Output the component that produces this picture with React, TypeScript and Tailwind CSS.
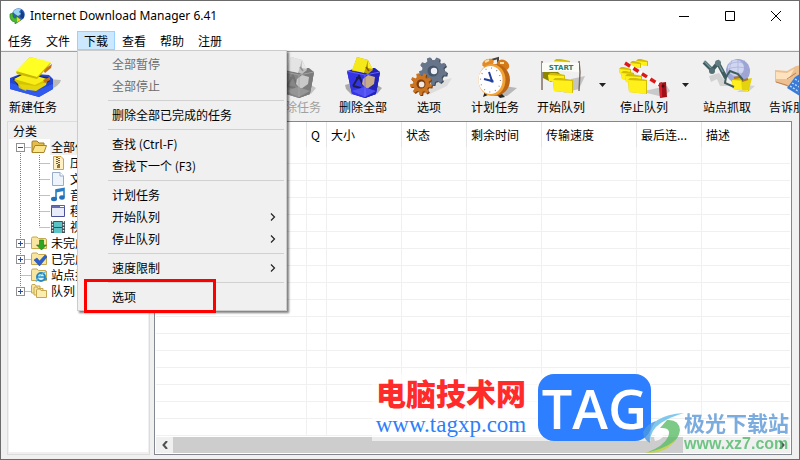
import type { ReactNode } from 'react'
import clsx from 'clsx'

type MenuEntry = { label: string; disabled?: boolean; submenu?: boolean } | null

const menus = ['任务', '文件', '下载', '查看', '帮助', '注册']

// null is a separator line
const downloadMenu: MenuEntry[] = [
	{ label: '全部暂停', disabled: true },
	{ label: '全部停止', disabled: true },
	null,
	{ label: '删除全部已完成的任务' },
	null,
	{ label: '查找 (Ctrl-F)' },
	{ label: '查找下一个 (F3)' },
	null,
	{ label: '计划任务' },
	{ label: '开始队列', submenu: true },
	{ label: '停止队列', submenu: true },
	null,
	{ label: '速度限制', submenu: true },
	null,
	{ label: '选项' },
]

const columns = [
	{ label: '', width: 'w-[151px]' },
	{ label: 'Q', width: 'w-5' },
	{ label: '大小', width: 'w-[75px]' },
	{ label: '状态', width: 'w-[65px]' },
	{ label: '剩余时间', width: 'w-[75px]' },
	{ label: '传输速度', width: 'w-[95px]' },
	{ label: '最后连...', width: 'w-[65px]' },
	{ label: '描述', width: '' },
]

const EMPTY_ROWS = 17

function gearPath(cx: number, cy: number, outer: number, inner: number, teeth: number) {
	const points: string[] = []
	const step = (Math.PI * 2) / teeth
	for (let i = 0; i < teeth; i++) {
		const a = i * step + 0.2
		const corners = [
			[inner, -0.32],
			[outer, -0.18],
			[outer, 0.18],
			[inner, 0.32],
		]
		for (const [r, d] of corners) {
			points.push(`${(cx + r * Math.cos(a + d * step)).toFixed(1)} ${(cy + r * Math.sin(a + d * step)).toFixed(1)}`)
		}
	}
	return `M${points.join('L')}Z`
}

function AppLogo() {
	return (
		<svg viewBox="0 0 16 16" className="h-4 w-4">
			<circle cx="9.5" cy="6.5" r="6.3" fill="#2c62b8" />
			<path d="M4 4Q7-1 12 1L10 4L12 6L9 8L6 6Z" fill="#9bd4ef" />
			<path d="M12 2Q17 6 14 11L11 9L12 6Z" fill="#173c83" />
			<path d="M1 6Q0 13 6 14L6 16L12 12L7 8L7 10Q3 11 4 5Z" fill="#4bb832" stroke="#22731b" strokeWidth=".6" />
			<path d="M8 9L12 12L8 14Z" fill="#f1cf35" />
		</svg>
	)
}

function ToolIcon({ children, className }: { children: ReactNode; className?: string }) {
	return (
		<svg viewBox="0 0 56 44" className={clsx('h-11 w-14 shrink-0', className)}>
			{children}
		</svg>
	)
}

function NewTaskIcon() {
	return (
		<ToolIcon>
			<path d="M42 24L56 25Q55 31 41 37Z" fill="#b9b9b9" />
			<path d="M5 23L18 18L44 20L48 24V34L34 42L5 34Z" fill="#2345cf" />
			<path d="M5 28L33 35L48 29V34L34 42L5 34Z" fill="#3159ee" />
			<path d="M8 24L16 19L43 22L45 26L32 33L13 31Z" fill="#14277f" />
			<path d="M9 25L20 19L42 25L32 33L22 33L21 36L14 33L13 29Z" fill="#d3c400" />
			<path d="M9 24L21 18L42 24L30 30Z" fill="#f8ed16" />
			<path d="M14 29L31 31L42 26L41 30L31 36L17 34Z" fill="#e4d50c" />
			<path d="M38 15L47 9L46 13L40 18ZM38 25L45 22L45 25L40 28Z" fill="#c8710e" />
			<path d="M11 17L25 2L46 8L32 24L12 19Z" fill="#c7b900" />
			<path d="M11 16L25 2L46 7L32 22Z" fill="#ffff24" />
		</ToolIcon>
	)
}

function DeleteIcon({ className }: { className?: string }) {
	return (
		<ToolIcon className={className}>
			<path d="M10 30L17 28V40L11 34ZM42 30L47 33L42 39Z" fill="#aaa" />
			<path d="M12 16L22 13H40L45 17L41 39L30 43L17 39Z" fill="#2321bb" />
			<path d="M12 16L30 20L45 17L41 39L30 43L17 39Z" fill="#3434e2" />
			<path d="M30 20L45 17L41 39L30 43Z" fill="#2424b8" />
			<path d="M18 31L24 21L28 30M18 31L26 33M21 23L26 23" stroke="#1e1e56" strokeWidth="2" fill="none" />
			<path d="M28 24L33 20L40 22L39 29L32 34L27 29Z" fill="#c8ab89" />
			<path d="M17 36L29 32L41 36L30 42Z" fill="#4f50f2" />
			<path d="M12 16L30 20L45 17M30 20V42" stroke="#7470ff" strokeWidth=".8" fill="none" />
			<path d="M22 2L33 5L38 15L33 19L28 17L17 16Z" fill="#b9a700" />
			<path d="M22 2L33 5L29 18L17 15Z" fill="#f5e91a" />
			<path d="M33 6L38 14L33 13Z" fill="#ffed28" />
			<path d="M31 12L34 16" stroke="#875017" strokeWidth="1.5" />
		</ToolIcon>
	)
}

function GearsIcon() {
	return (
		<ToolIcon>
			<path d="M35 27L51 23L46 31L29 39L20 40Z" fill="#ddd" />
			<path d={gearPath(33, 17, 14, 11, 9)} fill="#3e4956" />
			<path d={gearPath(32, 16, 14, 11, 9)} fill="#66758a" />
			<circle cx="32" cy="16" r="5.5" fill="#47566a" />
			<circle cx="33" cy="16" r="3.2" fill="#eef2f6" />
			<path d={gearPath(21, 30, 11, 8, 9)} fill="#7c3c0c" />
			<path d={gearPath(20, 29, 11, 8, 9)} fill="#cb7422" />
			<circle cx="20" cy="29" r="4.5" fill="#7c3c0c" />
			<circle cx="20.6" cy="29.4" r="2.8" fill="#f1e8e0" />
		</ToolIcon>
	)
}

function ClockIcon() {
	return (
		<ToolIcon>
			<path d="M37 31L50 33L40 41H30Z" fill="#b8b8b8" />
			<path d="M18 36L16 42L21 40ZM34 38L38 42L33 43L29 39Z" fill="#252525" />
			<path d="M21 6L31 3L31 8" stroke="#444" strokeWidth="2" fill="none" />
			<ellipse cx="21" cy="8" rx="6" ry="4" fill="#df8b2b" transform="rotate(-22 21 8)" />
			<ellipse cx="36" cy="10" rx="6.5" ry="5" fill="#d47a18" transform="rotate(28 36 10)" />
			<path d="M18 7L22 5M33 8L37 8" stroke="#ffdca2" strokeWidth="2" />
			<ellipse cx="28" cy="25" rx="15" ry="16" fill="#bc6513" />
			<ellipse cx="25" cy="25" rx="13.5" ry="16" fill="#f2a338" />
			<ellipse cx="23.5" cy="25" rx="12" ry="14" fill="#fff" />
			<ellipse cx="23.5" cy="25" rx="10" ry="12" fill="none" stroke="#888" strokeDasharray="1 4.8" strokeWidth="1.2" />
			<path d="M22 17L25 26L17 24" fill="none" stroke="#22419f" strokeWidth="2" />
			<circle cx="25" cy="26" r="1.6" fill="#22419f" />
		</ToolIcon>
	)
}

function Folder({ x, y, w, h }: { x: number; y: number; w: number; h: number }) {
	return (
		<g>
			<path d={`M${x} ${y + 1}L${x + 2} ${y - 1}L${x + w * 0.4} ${y - 1}L${x + w} ${y + 1}V${y + h}L${x + 1} ${y + h - 2}Z`} fill="#d2bd00" />
			<path d={`M${x} ${y + 1}L${x + w - 1} ${y + 2}L${x + w - 1} ${y + h}L${x + 1} ${y + h - 2}Z`} fill="#fff01c" />
		</g>
	)
}

function StartQueueIcon() {
	return (
		<ToolIcon>
			<path d="M38 24L52 21L46 34L30 38L38 33Z" fill="#c4c4c4" />
			<Folder x={21} y={5} w={16} h={6} />
			<path d="M10 17H25L29 21L18 27L10 23Z" fill="#8d8500" />
			<Folder x={15} y={19} w={17} h={9} />
			<Folder x={20} y={24} w={20} h={14} />
			<path d="M9 6V35M46 6L47 17L46 36" stroke="#78665a" strokeWidth="1.4" fill="none" />
			<path d="M9 8Q28 6 46 8V17Q28 15 9 17Z" fill="#fcfcf6" />
			<text x="28" y="15" textAnchor="middle" className="fill-[#1f8078] font-['DejaVu_Sans'] text-[7px] font-bold">
				START
			</text>
		</ToolIcon>
	)
}

function StopQueueIcon() {
	return (
		<ToolIcon>
			<path d="M28 36L51 31L54 36L47 42L31 38Z" fill="#c9c9c9" />
			<Folder x={20} y={5} w={12} h={6} />
			<Folder x={14} y={7} w={11} h={6} />
			<Folder x={3} y={13} w={12} h={8} />
			<Folder x={5} y={17} w={13} h={9} />
			<Folder x={9} y={20} w={17} h={9} />
			<Folder x={12} y={24} w={19} h={15} />
			<path d="M9 8L47 32" stroke="#fff" strokeWidth="3.5" />
			<path d="M9 8L47 32" stroke="#e01717" strokeWidth="3.5" strokeDasharray="6 4" />
			<path d="M43 28L50 27L51 42L44 43Z" fill="#a30e18" />
			<path d="M43 28L46 27V42L44 43Z" fill="#d3232b" />
			<circle cx="47" cy="31" r="1.5" fill="#401019" />
		</ToolIcon>
	)
}

function GrabberIcon() {
	return (
		<ToolIcon>
			<path d="M10 21L20 18L30 31L21 31L18 24L12 27ZM48 30L56 31L49 37H38Z" fill="#d2d2d2" />
			<circle cx="39" cy="16" r="12" fill="#9ea7d6" />
			<circle cx="37" cy="13" r="8" fill="#d0d5f0" />
			<path d="M29 10Q39 4 49 10M27 15Q39 9 51 15M28 21Q39 15 50 21M33 5Q28 16 33 27M39 4V28M45 5Q50 16 45 27" stroke="#98a0d0" strokeWidth=".5" fill="none" />
			<Folder x={33} y={24} w={17} h={12} />
			<path d="M42 25L53 23L50 35L43 35Z" fill="#e2d30e" />
			<path d="M35 23L41 22M43 26L49 24" stroke="#b77519" strokeWidth="2" />
			<path d="M5 7L13 15L19 8L27 23" stroke="#3f5d61" strokeWidth="4" fill="none" />
			<path d="M5 6L12 13M19 8L24 17" stroke="#78979a" strokeWidth="1.4" fill="none" />
			<path d="M27 22L31 16L39 19L44 25M27 22L26 28L35 32" stroke="#405d5e" strokeWidth="2" fill="none" />
			<circle cx="19" cy="8" r="3" fill="#637c80" />
			<circle cx="13" cy="16" r="3" fill="#536f73" />
		</ToolIcon>
	)
}

function TellFriendIcon() {
	return (
		<ToolIcon>
			<path d="M10 15L22 16L31 11L45 9V40L29 34L10 27Z" fill="#edc091" />
			<path d="M11 17L22 18L29 14L24 24L11 24Z" fill="#fde2bd" />
			<path d="M11 27L21 30L29 34M22 24L31 18" stroke="#bd8052" strokeWidth="1" fill="none" />
			<path d="M30 22L38 17V43L22 33Z" fill="#397bd7" />
			<path d="M30 24L38 29M27 28L38 34M25 31L36 38" stroke="#bcdcff" strokeWidth="1.4" strokeDasharray="2 1.5" />
		</ToolIcon>
	)
}

function ToolButton({ label, disabled, children }: { label: string; disabled?: boolean; children: ReactNode }) {
	return (
		<button
			type="button"
			disabled={disabled}
			className="flex w-16 shrink-0 flex-col items-center pt-[3px] leading-4 whitespace-nowrap disabled:text-[#a0a0a0]"
		>
			{children}
			{label}
		</button>
	)
}

function DropArrow({ label }: { label: string }) {
	return (
		<button type="button" aria-label={label} className="flex w-[15px] shrink-0 items-center justify-center">
			<svg viewBox="0 0 7 4" className="mb-1 h-1 w-[7px]">
				<path d="M0 0H7L3.5 4Z" fill="#222" />
			</svg>
		</button>
	)
}

function SmallIcon({ children }: { children: ReactNode }) {
	return (
		<svg viewBox="0 0 16 16" className="h-4 w-4 shrink-0">
			{children}
		</svg>
	)
}

const closedFolder = (
	<path d="M.5 3.5Q.5 2 2 2H6L7.5 3.5H14Q15.5 3.5 15.5 5V13.5H.5Z" fill="#f8e6a0" stroke="#c6a850" />
)

const treeIcons: Record<string, ReactNode> = {
	open: (
		<>
			<path d="M1 13V3Q1 2 2 2H6L8 4H13V13Z" fill="#e6bc4a" stroke="#9e7c28" />
			<path d="M1 13.5L4 6.5H15.5L13 13.5Z" fill="#fbe58c" stroke="#a88426" />
		</>
	),
	zip: (
		<>
			<path d="M3.5 1.5H11L13.5 4V14.5H3.5Z" fill="#fff0c4" stroke="#d2a04c" />
			<path d="M7 2V10M9 3V11" stroke="#735d3b" strokeWidth="2" strokeDasharray="1 1" />
			<path d="M7 10H10V13H7Z" fill="#9c7430" />
		</>
	),
	doc: (
		<>
			<path d="M2.5 1.5H10L13.5 5V14.5H2.5Z" fill="#eef4fc" stroke="#9aabc8" />
			<path d="M10 1.5V5H13.5" fill="#fff" stroke="#9aabc8" />
		</>
	),
	music: (
		<>
			<path d="M6 12V3L14 1.5V10" stroke="#2b7dc4" strokeWidth="1.6" fill="none" />
			<path d="M6 3L14 1.5V4L6 5.5Z" fill="#2b7dc4" />
			<ellipse cx="4" cy="12" rx="3" ry="2.2" fill="#2370b8" />
			<ellipse cx="12" cy="10.5" rx="2.8" ry="2.2" fill="#2370b8" />
		</>
	),
	program: (
		<>
			<path d="M1.5 2.5H14.5V13.5H1.5Z" fill="#e8ebf8" stroke="#4a5096" />
			<path d="M1.5 2.5H14.5V5H1.5Z" fill="#656cb4" />
			<path d="M10 3.5H14" stroke="#fff" />
		</>
	),
	video: (
		<>
			<path d="M1 2H15V14H1Z" fill="#424e58" />
			<path d="M4 3H12V8H4ZM4 9H12V14H4Z" fill="#5bc2c6" />
			<path d="M2.5 2V14M13.5 2V14" stroke="#f0f0f0" strokeDasharray="1.5 1.5" strokeWidth="1.4" />
		</>
	),
	unfinished: (
		<>
			{closedFolder}
			<path d="M8.5 5H12.5V10H15.5L10.5 15L5.5 10H8.5Z" fill="#2fa620" stroke="#1b7010" strokeWidth=".6" />
		</>
	),
	finished: (
		<>
			{closedFolder}
			<path d="M3 9L6 7L8.5 10L14 4L16 6L8.5 15Z" fill="#2a60cf" stroke="#1a4398" strokeWidth=".5" />
		</>
	),
	site: (
		<>
			{closedFolder}
			<circle cx="10" cy="10" r="4" fill="#d9f1fb" stroke="#238bc2" strokeWidth="2" />
			<path d="M6 10H14M13 12H16" stroke="#238bc2" strokeWidth="1.6" />
			<path d="M5 15Q8 7 15.5 4.5" stroke="#5ab8e4" fill="none" />
		</>
	),
	queue: (
		<>
			<path d="M.5 2.5Q.5 1.5 2 1.5H4L5 3H9V10H.5Z" fill="#f8e6a0" stroke="#c6a850" />
			<path d="M3 5Q3 4 4 4H6L7 5.5H12V12H3Z" fill="#f8e6a0" stroke="#c6a850" />
			<path d="M5.5 7Q5.5 6 7 6H9L10 7.5H15.5V14.5H5.5Z" fill="#fbedb0" stroke="#c6a850" />
		</>
	),
}

const tree = [
	{ label: '全部任务', icon: 'open', toggle: '-' },
	{ label: '压缩文件', icon: 'zip', child: true },
	{ label: '文档', icon: 'doc', child: true },
	{ label: '音乐', icon: 'music', child: true },
	{ label: '程序', icon: 'program', child: true },
	{ label: '视频', icon: 'video', child: true, last: true },
	{ label: '未完成', icon: 'unfinished', toggle: '+' },
	{ label: '已完成', icon: 'finished', toggle: '+' },
	{ label: '站点抓取', icon: 'site' },
	{ label: '队列', icon: 'queue', toggle: '+', last: true },
]

// Dotted connector lines and the expand box in front of a tree icon
function TreeLines({ item, first }: { item: (typeof tree)[number]; first: boolean }) {
	const width = item.child ? 41 : 22
	const lineX = item.child ? 30.5 : 11.5
	return (
		<svg viewBox={`0 0 ${width} 16`} className={clsx('h-4 shrink-0', item.child ? 'w-[41px]' : 'w-[22px]')}>
			<g stroke="#808080" strokeDasharray="1 1" fill="none">
				{item.child && <path d="M11.5 0V16" />}
				<path d={`M${lineX} ${first ? 8 : 0}V${item.last ? 8 : 16}`} />
				<path d={`M${lineX} 8.5H${width}`} />
			</g>
			{item.toggle && (
				<>
					<rect x="7.5" y="4.5" width="8" height="8" fill="#fff" stroke="#919191" />
					<path d={item.toggle === '+' ? 'M9 8.5H14M11.5 6V11' : 'M9 8.5H14'} stroke="#2c4ba0" />
				</>
			)}
		</svg>
	)
}

function DownloadMenu() {
	return (
		<div
			role="menu"
			className="absolute top-full left-0 z-10 w-[210px] border border-[#ccc] bg-[#f0f0f0] py-[2px] shadow-[2px_2px_2px_rgba(0,0,0,0.5)]"
		>
			{downloadMenu.map((entry, i) =>
				entry ? (
					<button
						key={i}
						type="button"
						role="menuitem"
						disabled={entry.disabled}
						className="flex h-[22px] w-full items-center justify-between pr-[10px] pl-[34px] disabled:text-[#6d6d6d]"
					>
						{entry.label}
						{entry.submenu && (
							<svg viewBox="0 0 6 8" className="h-2 w-[6px]">
								<path d="M1 .5L4.5 4L1 7.5" fill="none" stroke="#222" strokeWidth="1.2" />
							</svg>
						)}
					</button>
				) : (
					<div key={i} role="separator" className="my-[3px] mr-[2px] ml-[30px] h-px bg-[#d0d0d0]" />
				)
			)}
			{/* Highlight frame round the last entry */}
			<div className="absolute -bottom-[3px] left-[6px] h-[34px] w-[132px] border-3 border-[#f00]" />
		</div>
	)
}

function TitleBar() {
	return (
		<header className="flex h-[30px] items-center justify-between pl-2">
			<div className="flex items-center gap-[5px]">
				<AppLogo />
				<h1 className="font-['Noto_Sans','Noto_Sans_CJK_SC',sans-serif] text-[12px]">Internet Download Manager 6.41</h1>
			</div>
			<div className="flex h-full">
				<button type="button" aria-label="最小化" className="flex w-[46px] items-center justify-center">
					<svg viewBox="0 0 10 10" className="h-[10px] w-[10px]">
						<path d="M0 5.5H10" stroke="#000" />
					</svg>
				</button>
				<button type="button" aria-label="最大化" className="flex w-[46px] items-center justify-center">
					<svg viewBox="0 0 10 10" className="h-[10px] w-[10px]">
						<path d="M.5 .5H9.5V9.5H.5Z" fill="none" stroke="#000" />
					</svg>
				</button>
				<button type="button" aria-label="关闭" className="flex w-[46px] items-center justify-center">
					<svg viewBox="0 0 10 10" className="h-[10px] w-[10px]">
						<path d="M0 0L10 10M10 0L0 10" stroke="#000" />
					</svg>
				</button>
			</div>
		</header>
	)
}

function Toolbar() {
	return (
		<div className="flex h-[70px] gap-[2px] overflow-hidden border-t border-[#a0a0a0]">
			<ToolButton label="新建任务"><NewTaskIcon /></ToolButton>
			<div className="w-[196px] shrink-0" />
			<ToolButton label="删除任务" disabled><DeleteIcon className="opacity-60 grayscale" /></ToolButton>
			<ToolButton label="删除全部"><DeleteIcon /></ToolButton>
			<ToolButton label="选项"><GearsIcon /></ToolButton>
			<ToolButton label="计划任务"><ClockIcon /></ToolButton>
			<ToolButton label="开始队列"><StartQueueIcon /></ToolButton>
			<DropArrow label="选择要开始的队列" />
			<ToolButton label="停止队列"><StopQueueIcon /></ToolButton>
			<DropArrow label="选择要停止的队列" />
			<ToolButton label="站点抓取"><GrabberIcon /></ToolButton>
			<ToolButton label="告诉朋友"><TellFriendIcon /></ToolButton>
		</div>
	)
}

function CategoryPanel() {
	return (
		<aside className="flex w-[143px] shrink-0 flex-col border border-[#dcdcdc] px-px pb-[2px]">
			<h2 className="h-[17px] pl-1 leading-[18px]">分类</h2>
			<ul className="flex-1 overflow-hidden bg-white">
				{tree.map((item, i) => (
					<li key={item.label} className="flex h-4 items-center">
						<TreeLines item={item} first={i === 0} />
						<SmallIcon>{treeIcons[item.icon]}</SmallIcon>
						<span className={clsx('ml-[3px] px-px leading-4 whitespace-nowrap', i === 0 && 'bg-[#f0f0f0]')}>
							{item.label}
						</span>
					</li>
				))}
			</ul>
		</aside>
	)
}

function DownloadList() {
	return (
		<section className="min-w-0 flex-1 border border-[#828790] bg-white p-px pt-0">
			<table className="w-full table-fixed border-separate border-spacing-0">
				<thead>
					<tr className="h-[25px]">
						{columns.map((col) => (
							<th
								key={col.label}
								className={clsx(
									'overflow-hidden border-r border-[#e5e5e5] p-0 pl-1 text-left font-normal whitespace-nowrap last:border-r-0',
									col.width
								)}
							>
								{col.label}
							</th>
						))}
					</tr>
				</thead>
				<tbody>
					{Array.from({ length: EMPTY_ROWS }, (_, row) => (
						<tr key={row} className="h-[17px]">
							{columns.map((col) => (
								<td key={col.label} className="border-r border-b border-[#f0f0f0] p-0 last:border-r-0" />
							))}
						</tr>
					))}
				</tbody>
			</table>
			<div className="mt-px flex h-4 bg-[#f0f0f0]">
				<button type="button" aria-label="向左滚动" className="flex w-[17px] items-center justify-center">
					<svg viewBox="0 0 6 8" className="h-2 w-[6px]">
						<path d="M5 0L1.5 4L5 8" fill="none" stroke="#505050" strokeWidth="2" />
					</svg>
				</button>
				<div className="flex-1">
					<div className="h-full w-[85%] bg-[#cdcdcd]" />
				</div>
				<button type="button" aria-label="向右滚动" className="flex w-[17px] items-center justify-center">
					<svg viewBox="0 0 6 8" className="h-2 w-[6px]">
						<path d="M1 0L4.5 4L1 8" fill="none" stroke="#505050" strokeWidth="2" />
					</svg>
				</button>
			</div>
		</section>
	)
}

function TagWatermark() {
	return (
		<div className="absolute right-[148px] bottom-[18px] flex h-[67px] bg-white/60">
			<div className="flex w-[166px] flex-col items-center justify-center pr-2 whitespace-nowrap">
				<strong className="text-[30px] leading-[34px] font-black text-[#ff2b2b]">电脑技术网</strong>
				<span className="font-['Liberation_Serif',serif] text-[23px] leading-[32px] text-[#2d7ff9]">www.tagxp.com</span>
			</div>
			<div className="flex w-[113px] items-center justify-center rounded-2xl bg-[#2d7fff] font-['Open_Sans',sans-serif] text-[54px] leading-[64px] font-semibold text-white">
				TAG
			</div>
		</div>
	)
}

function SiteWatermark() {
	return (
		<div className="absolute right-[10px] bottom-[5px] flex items-center opacity-80">
			<svg viewBox="0 0 42 42" className="h-[42px] w-[42px]">
				<path d="M4 25Q8 3 42 1Q28 5 19 11Q8 18 8 30Z" fill="#62bce8" />
				<path d="M1 20Q6 11 14 9Q6 20 8 31Q2 28 1 20Z" fill="#4c98e0" />
				<path d="M25 8Q37 7 38 18Q36 36 4 41Q22 34 26 25Q30 15 18 16Z" fill="#5cbd68" />
				<path d="M3 41Q26 36 34 27Q25 42 3 41Z" fill="#c4d53d" />
				<path d="M12 26Q15 18 22 20Q22 28 13 29Z" fill="#fff" />
			</svg>
			<div className="flex flex-col whitespace-nowrap">
				<strong className="text-[21px] leading-[23px] font-bold text-[#5b98d8]">极光下载站</strong>
				<span className="font-['Liberation_Sans',sans-serif] text-[16px] leading-[20px] font-bold text-[#4fba6a]">www.xz7.com</span>
			</div>
		</div>
	)
}

export default function App() {
	return (
		<main className="relative w-full overflow-hidden border border-[#6b6b6b] bg-[#f0f0f0] font-['Noto_Sans_CJK_SC',sans-serif] text-[12px] leading-4 text-black">
			<div className="bg-white">
				<TitleBar />
				<nav className="flex h-[19px]">
					{menus.map((name) => (
						<div key={name} className="relative">
							<button
								type="button"
								className={clsx(
									'h-full w-[38px] border',
									name === '下载' ? 'border-[#99d1ff] bg-[#cce8ff]' : 'border-transparent'
								)}
							>
								{name}
							</button>
							{name === '下载' && <DownloadMenu />}
						</div>
					))}
				</nav>
			</div>
			<div className="pt-px">
				<Toolbar />
				<div className="flex gap-1 pr-[7px] pb-1 pl-[6px]">
					<CategoryPanel />
					<DownloadList />
				</div>
			</div>
			<TagWatermark />
			<SiteWatermark />
		</main>
	)
}
